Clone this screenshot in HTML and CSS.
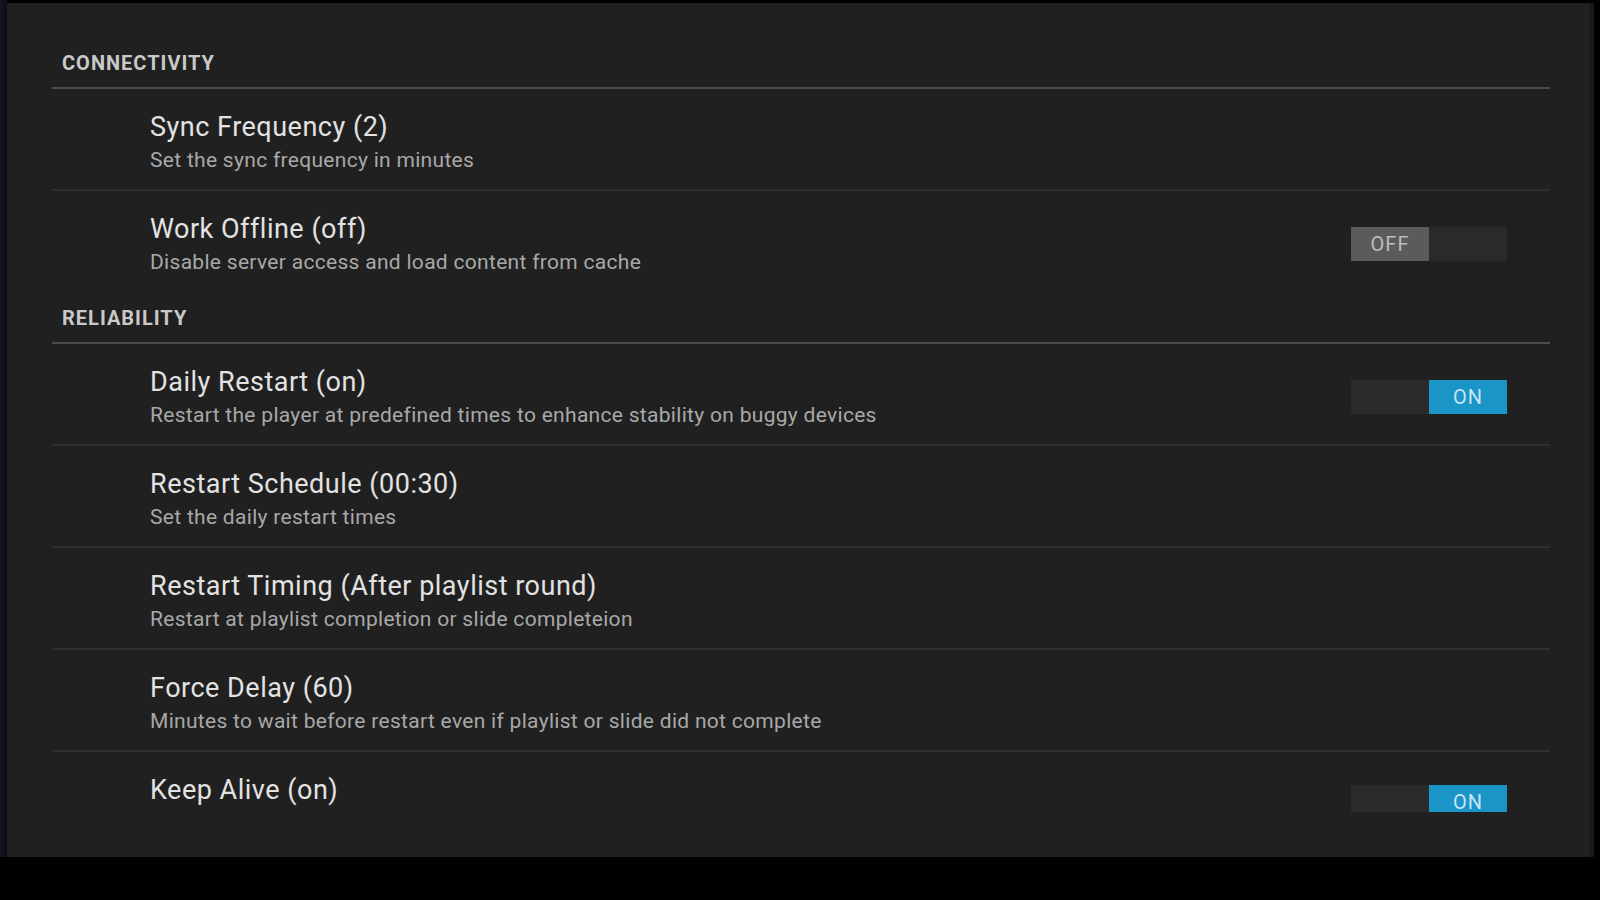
FILE: index.html
```html
<!DOCTYPE html>
<html>
<head>
<meta charset="utf-8">
<link rel="stylesheet" href="styles.css">
</head>
<body>
<div class="screen">
  <div class="panel">
    <div class="list">
      <div class="header first">CONNECTIVITY</div>
      <div class="row">
        <div class="text">
          <div class="title">Sync Frequency (2)</div>
          <div class="summary">Set the sync frequency in minutes</div>
        </div>
      </div>
      <div class="row last">
        <div class="text">
          <div class="title">Work Offline (off)</div>
          <div class="summary">Disable server access and load content from cache</div>
        </div>
        <div class="toggle off"><span class="thumb">OFF</span><span class="rest"></span></div>
      </div>
      <div class="header">RELIABILITY</div>
      <div class="row">
        <div class="text">
          <div class="title">Daily Restart (on)</div>
          <div class="summary">Restart the player at predefined times to enhance stability on buggy devices</div>
        </div>
        <div class="toggle on"><span class="rest"></span><span class="thumb">ON</span></div>
      </div>
      <div class="row">
        <div class="text">
          <div class="title">Restart Schedule (00:30)</div>
          <div class="summary">Set the daily restart times</div>
        </div>
      </div>
      <div class="row">
        <div class="text">
          <div class="title">Restart Timing (After playlist round)</div>
          <div class="summary">Restart at playlist completion or slide completeion</div>
        </div>
      </div>
      <div class="row">
        <div class="text">
          <div class="title">Force Delay (60)</div>
          <div class="summary">Minutes to wait before restart even if playlist or slide did not complete</div>
        </div>
      </div>
      <div class="row last single">
        <div class="text">
          <div class="title">Keep Alive (on)</div>
        </div>
        <div class="clip">
          <div class="toggle on"><span class="rest"></span><span class="thumb">ON</span></div>
        </div>
      </div>
    </div>
  </div>
</div>
</body>
</html>
```
FILE: styles.css
```css
html, body {
  margin: 0;
  padding: 0;
  background: #000;
  width: 1600px;
  height: 900px;
  overflow: hidden;
  font-family: Roboto, "Noto Sans", sans-serif;
}

.screen {
  display: flex;
  height: 857px;
  padding-top: 3px;
  box-sizing: border-box;
  background: linear-gradient(to right, #121820 0, #0b0e11 7px, transparent 7px);
}

.panel {
  margin-left: 7px;
  width: 1583px;
  background: #202020;
  box-shadow: 4px 0 0 #181818;
}

.list {
  padding: 0 40px 0 45px;
}

.header {
  padding: 15px 10px 12px;
  font-size: 20px;
  line-height: 24px;
  font-weight: bold;
  letter-spacing: 1px;
  color: #c9c9c9;
  border-bottom: 2px solid #4b4b4b;
}

.header.first {
  padding-top: 48px;
}

.row {
  display: flex;
  align-items: center;
  padding: 22px 43px 16px 98px;
  border-bottom: 2px solid #2e2e2e;
}

.row.last {
  border-bottom: none;
}

.text {
  flex: 1;
}

.title {
  font-size: 27px;
  line-height: 32px;
  letter-spacing: 0.5px;
  color: #e2e2e2;
}

.summary {
  margin-top: 4px;
  font-size: 21px;
  line-height: 26px;
  letter-spacing: 0.3px;
  color: #a8a8a8;
}

.toggle {
  display: flex;
  width: 156px;
  height: 34px;
  background: #2a2a2a;
}

.toggle .thumb,
.toggle .rest {
  flex: 1;
  display: flex;
  align-items: center;
  justify-content: center;
  font-size: 20px;
  letter-spacing: 1px;
}

.toggle.off .thumb {
  background: #5b5b5b;
  color: #bdbdbd;
}

.toggle.on .thumb {
  background: #1b94c8;
  color: #c6e6f4;
}

.row.single {
  align-items: flex-start;
}

.clip {
  margin-top: 11px;
  height: 27px;
  overflow: hidden;
}
```
